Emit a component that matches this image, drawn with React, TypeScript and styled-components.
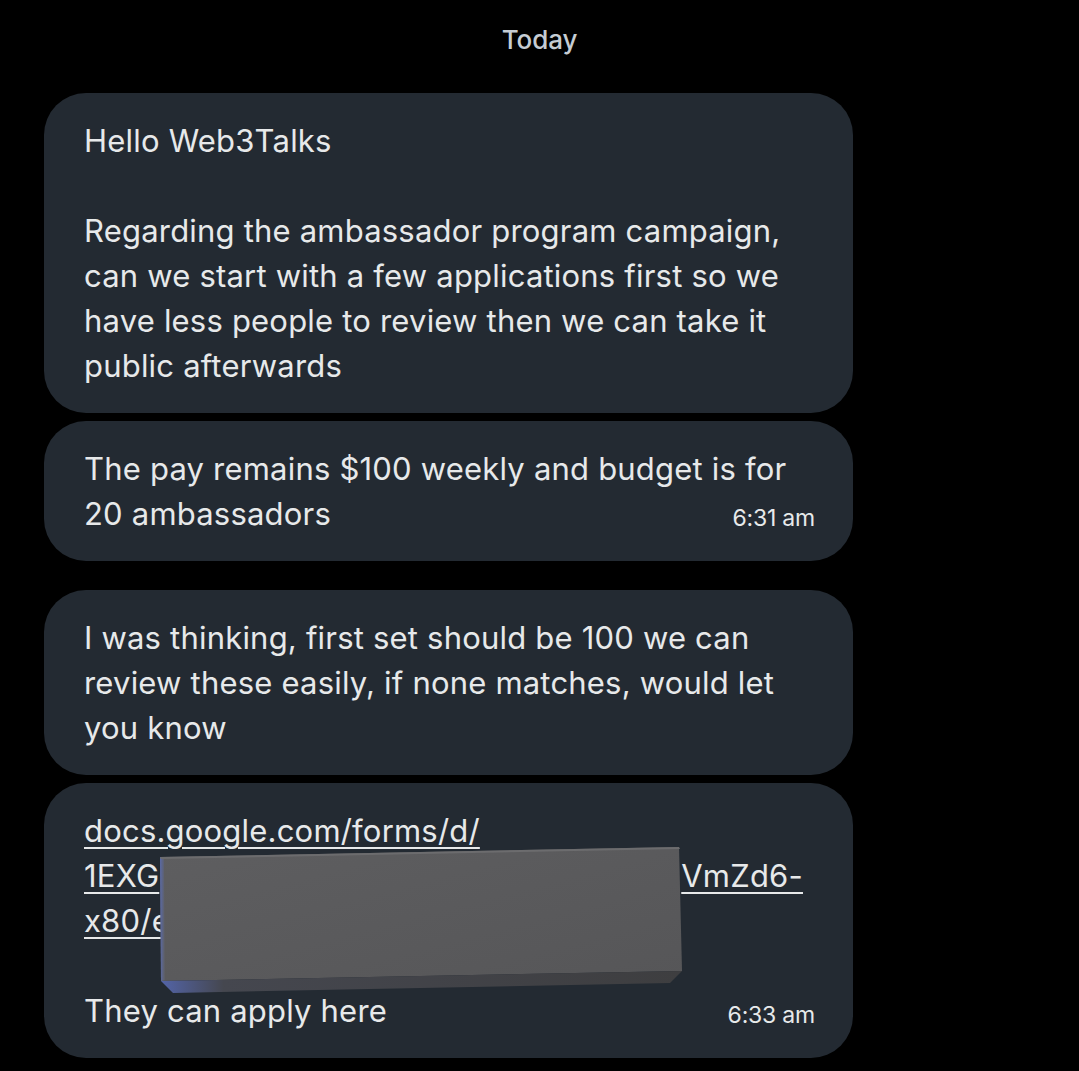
import React from 'react';
import styled, { createGlobalStyle } from 'styled-components';

const GlobalStyle = createGlobalStyle`
  html, body {
    margin: 0;
    padding: 0;
    background: #000;
  }
  body {
    font-family: Inter, "Noto Sans", Roboto, sans-serif;
    -webkit-font-smoothing: antialiased;
  }
`;

const Page = styled.div`
  width: 1079px;
  height: 1071px;
  background: #000;
  overflow: hidden;
`;

const DayLabel = styled.div`
  padding-top: 22px;
  height: 71px;
  line-height: 36px;
  text-align: center;
  font-size: 26px;
  font-weight: 500;
  color: #c5ccd3;
  letter-spacing: -0.1px;
`;

const Thread = styled.div`
  display: flex;
  flex-direction: column;
  padding-left: 44px;
`;

const Group = styled.div`
  display: flex;
  flex-direction: column;
  gap: 8px;

  & + & {
    margin-top: 29px;
  }
`;

const Bubble = styled.div`
  position: relative;
  width: 809px;
  box-sizing: border-box;
  padding: 25px 38px 25px 40px;
  border-radius: 42px;
  background: #232a32;
  color: #e7e9ea;
  font-size: 31px;
  line-height: 45px;
  letter-spacing: 0.2px;
`;

const Text = styled.div`
  white-space: pre-line;
`;

const LastRow = styled.div`
  display: flex;
  justify-content: space-between;
  align-items: flex-end;
`;

const Link = styled.span`
  text-decoration: underline;
  text-decoration-thickness: 2px;
  text-underline-offset: 5px;
`;

const Gap = styled.span<{ $w: number }>`
  display: inline-block;
  width: ${(p) => p.$w}px;
`;

const Time = styled.span`
  font-size: 23px;
  line-height: 35px;
  color: #e7e9ea;
  letter-spacing: -0.2px;
`;

const Redaction = styled.svg`
  position: absolute;
  left: 110px;
  top: 58px;
  pointer-events: none;
`;

function Censor() {
  return (
    <Redaction width="540" height="160" viewBox="110 58 540 160">
      <defs>
        <linearGradient id="front" x1="0" y1="0" x2="1" y2="1">
          <stop offset="0" stopColor="#5e5e60" />
          <stop offset="1" stopColor="#565658" />
        </linearGradient>
        <linearGradient id="base" x1="0" y1="0" x2="1" y2="0">
          <stop offset="0" stopColor="#5364a8" />
          <stop offset="0.12" stopColor="#45474f" />
          <stop offset="1" stopColor="#3e3e40" />
        </linearGradient>
        <linearGradient id="edge" x1="0" y1="0" x2="1" y2="0">
          <stop offset="0" stopColor="#5a6aa8" />
          <stop offset="1" stopColor="#5e5e60" />
        </linearGradient>
      </defs>
      <polygon points="116,74 635,64 638,188 117,198" fill="url(#front)" />
      <polygon points="117,198 638,188 626,200 129,210" fill="url(#base)" />
      <polygon points="116,74 120,75 121,197 117,198" fill="url(#edge)" />
      <polygon points="116,74 635,64 636,66 117,76" fill="#6c6c6e" />
    </Redaction>
  );
}

interface Message {
  id: number;
  text: React.ReactNode;
  lastLine?: string;
  time?: string;
  redacted?: boolean;
}

const groups: Message[][] = [
  [
    {
      id: 1,
      text: 'Hello Web3Talks\n\nRegarding the ambassador program campaign,\ncan we start with a few applications first so we\nhave less people to review then we can take it\npublic afterwards',
    },
    {
      id: 2,
      text: 'The pay remains $100 weekly and budget is for',
      lastLine: '20 ambassadors',
      time: '6:31 am',
    },
  ],
  [
    {
      id: 3,
      text: 'I was thinking, first set should be 100 we can\nreview these easily, if none matches, would let\nyou know',
    },
    {
      id: 4,
      text: (
        <>
          <Link>
            {'docs.google.com/forms/d/\n1EXG'}
            <Gap $w={522} />
            {'VmZd6-\nx80/e'}
          </Link>
          {'\n\u00a0'}
        </>
      ),
      lastLine: 'They can apply here',
      time: '6:33 am',
      redacted: true,
    },
  ],
];

export default function App() {
  return (
    <Page>
      <GlobalStyle />
      <DayLabel>Today</DayLabel>
      <Thread>
        {groups.map((group, i) => (
          <Group key={i}>
            {group.map((msg) => (
              <Bubble key={msg.id}>
                <Text>{msg.text}</Text>
                {msg.lastLine && (
                  <LastRow>
                    <span>{msg.lastLine}</span>
                    <Time>{msg.time}</Time>
                  </LastRow>
                )}
                {msg.redacted && <Censor />}
              </Bubble>
            ))}
          </Group>
        ))}
      </Thread>
    </Page>
  );
}
